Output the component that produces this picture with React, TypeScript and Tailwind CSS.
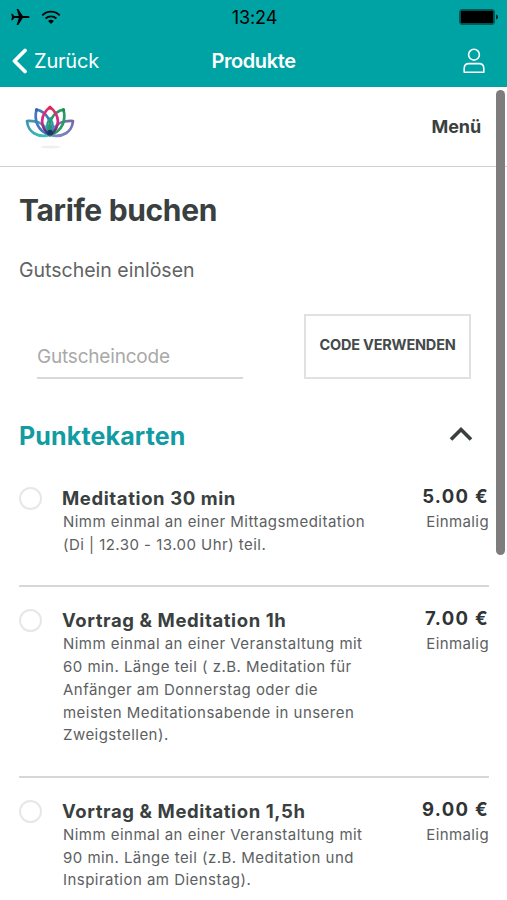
import React from 'react';

interface Tariff {
  title: string;
  lines: string[];
  price: string;
}

const TARIFFS: Tariff[] = [
  {
    title: 'Meditation 30 min',
    lines: ['Nimm einmal an einer Mittagsmeditation', '(Di | 12.30 - 13.00 Uhr) teil.'],
    price: '5.00 €',
  },
  {
    title: 'Vortrag & Meditation 1h',
    lines: [
      'Nimm einmal an einer Veranstaltung mit',
      '60 min. Länge teil ( z.B. Meditation für',
      'Anfänger am Donnerstag oder die',
      'meisten Meditationsabende in unseren',
      'Zweigstellen).',
    ],
    price: '7.00 €',
  },
  {
    title: 'Vortrag & Meditation 1,5h',
    lines: [
      'Nimm einmal an einer Veranstaltung mit',
      '90 min. Länge teil (z.B. Meditation und',
      'Inspiration am Dienstag).',
    ],
    price: '9.00 €',
  },
];

const StatusBar: React.FC = () => (
  <div className="grid h-[34px] grid-cols-[1fr_auto_1fr] items-center pl-2.5 pr-2 text-black">
    <div className="flex items-center gap-[11px]">
      <svg width="20" height="18" viewBox="0 0 20 18" fill="currentColor">
        <path d="M19.6 9c0 .7-.9 1.1-1.8 1.1h-5L8.3 17H6.6l2.2-6.9H4.3L2.5 12.3H1.2L2 9l-.8-3.3h1.3l1.8 2.2h4.5L6.6 1h1.7l4.5 6.9h5c.9 0 1.8.4 1.8 1.1Z" />
      </svg>
      <svg width="20" height="15" viewBox="0 0 20 15" fill="none" stroke="currentColor" strokeWidth="1.8">
        <path d="M1.3 5.3a12.3 12.3 0 0 1 17.4 0" />
        <path d="M4.6 8.5a7.7 7.7 0 0 1 10.8 0" />
        <path d="M10 14 7.1 11.1a4.1 4.1 0 0 1 5.8 0Z" fill="currentColor" stroke="none" />
      </svg>
    </div>
    <span className="text-center text-[18px] tracking-[-0.1px]">13:24</span>
    <svg className="justify-self-end" width="40" height="16" viewBox="0 0 40 16">
      <rect x="0.5" y="0.5" width="35" height="15" rx="2.5" fill="none" stroke="#05595a" />
      <rect x="1.5" y="1.5" width="33" height="13" rx="1" fill="#000" />
      <path d="M37 5.5c1.6.4 2 1.2 2 2.5s-.4 2.1-2 2.5Z" fill="#002b2b" />
    </svg>
  </div>
);

const NavBar: React.FC = () => (
  <div className="grid h-[53px] grid-cols-[1fr_auto_1fr] items-center pl-3 pr-[22px] text-white">
    <div className="flex items-center gap-[7px]">
      <svg width="15" height="26" viewBox="0 0 15 26" fill="none" stroke="currentColor" strokeWidth="3.8" strokeLinecap="round" strokeLinejoin="round">
        <path d="M13 2.5 2.5 13 13 23.5" />
      </svg>
      <span className="text-[20px] tracking-[-0.2px]">Zurück</span>
    </div>
    <span className="ml-2.5 text-center text-[20px] font-semibold tracking-[-0.4px]">Produkte</span>
    <svg className="justify-self-end" width="22" height="26" viewBox="0 0 22 26" fill="none" stroke="currentColor" strokeWidth="1.6">
      <circle cx="11" cy="6.7" r="5.4" />
      <path d="M1.2 24.2v-3.7c0-3.1 1.7-4.9 4.6-4.9h10.4c2.9 0 4.6 1.8 4.6 4.9v3.7Z" strokeLinejoin="round" />
    </svg>
  </div>
);

const LotusLogo: React.FC = () => (
  <svg width="50" height="46" viewBox="0 0 50 46" fill="none" strokeWidth="2.7" strokeLinejoin="round">
    <defs>
      <linearGradient id="petalLeft" x1="0" y1="0" x2="1" y2="1">
        <stop offset="0" stopColor="#3f93ad" />
        <stop offset="1" stopColor="#38c6b8" />
      </linearGradient>
      <linearGradient id="petalRight" x1="1" y1="0" x2="0" y2="1">
        <stop offset="0" stopColor="#7566a8" />
        <stop offset="1" stopColor="#7c8fcb" />
      </linearGradient>
      <linearGradient id="petalCenter" x1="0" y1="0" x2="0" y2="1">
        <stop offset="0" stopColor="#e22b69" />
        <stop offset="0.55" stopColor="#d02b8c" />
        <stop offset="1" stopColor="#27366f" />
      </linearGradient>
    </defs>
    <path d="M25 31C12 34 3 28 2 17c11-.5 20 4 23 14Z" stroke="url(#petalLeft)" />
    <path d="M25 31c13 3 22-3 23-14-11-.5-20 4-23 14Z" stroke="url(#petalRight)" />
    <path d="M25 31C12 27 9 16 11.5 5.5 22 8 28 18 25 31Z" stroke="#4379bb" />
    <path d="M25 31c13-4 16-15 13.5-25.5C28 8 22 18 25 31Z" stroke="#279b60" />
    <path d="M25 31c-11-8-10-20 0-28 10 8 11 20 0 28Z" stroke="url(#petalCenter)" />
    <path d="M25 31c-4-6-4-12 0-17 4 5 4 11 0 17Z" stroke="#2798a0" strokeWidth="1.8" />
    <circle cx="25" cy="28.5" r="2.8" fill="#183967" />
    <circle cx="25" cy="4" r="1.8" fill="#dc2450" />
    <circle cx="11.5" cy="6" r="1.7" fill="#3565a8" />
    <circle cx="38.5" cy="6" r="1.7" fill="#1d8c50" />
    <ellipse cx="25.5" cy="43" rx="10" ry="1.5" fill="#efefef" />
  </svg>
);

const TariffRow: React.FC<{ tariff: Tariff }> = ({ tariff }) => (
  <li className="flex border-b-2 border-[#d6d7d7] pb-[29px] pt-[22px]">
    <span className="size-[23px] shrink-0 rounded-full border-2 border-[#e7e7e7]" />
    <div className="ml-5 grow">
      <h3 className="-mt-px mb-px text-[18.5px] font-bold leading-6 tracking-[0.6px] text-[#3a3f40]">{tariff.title}</h3>
      <p className="ml-px whitespace-nowrap text-[15px] leading-[22.7px] tracking-[0.47px] text-[#5c6061]">
        {tariff.lines.map((line) => (
          <span key={line} className="block">{line}</span>
        ))}
      </p>
    </div>
    <div className="shrink-0 text-right">
      <div className="-mt-[3px] mb-[3px] text-[18.5px] font-bold leading-6 tracking-[1.3px] text-[#303435]">{tariff.price}</div>
      <div className="text-[15px] leading-[22.7px] tracking-[0.4px] text-[#5c6061]">Einmalig</div>
    </div>
  </li>
);

const App: React.FC = () => {
  return (
    <div className="relative h-[900px] w-[507px] overflow-hidden bg-white font-['Inter','Liberation_Sans',sans-serif]">
      <header className="h-[87px] bg-[#00a3a4]">
        <StatusBar />
        <NavBar />
      </header>

      <div className="flex h-20 items-center justify-between border-b border-[#cfd0d0] pl-[25px] pr-[26px]">
        <LotusLogo />
        <span className="text-[18px] font-bold tracking-[-0.1px] text-[#3a3f40]">Menü</span>
      </div>

      <main className="pl-[19px] pr-[18px]">
        <h1 className="mt-[23px] text-[30px] font-bold leading-10 tracking-[-0.35px] text-[#3a3f40]">Tarife buchen</h1>
        <p className="mt-[26px] text-[19.5px] leading-7 text-[#5f6364]">Gutschein einlösen</p>

        <div className="mt-[30px] flex items-end justify-between px-[18px]">
          <div className="h-[37px] w-[206px] border-b-2 border-[#d9d9d9] text-[19px] leading-[30px] tracking-[-0.2px] text-[#a9a9a9]">Gutscheincode</div>
          <button className="h-[65px] w-[167px] border-2 border-[#e0e1e1] pb-1 text-[14.5px] font-bold tracking-[-0.2px] text-[#44494a]">CODE VERWENDEN</button>
        </div>

        <div className="mt-10 flex h-9 items-center justify-between pr-4">
          <h2 className="text-[25px] font-bold tracking-[0.15px] text-[#119ba2]">Punktekarten</h2>
          <svg className="-mt-[7px]" width="24" height="16" viewBox="0 0 24 16" fill="none" stroke="#3a3f40" strokeWidth="3.6">
            <path d="M2 13.5 12 3.5l10 10" />
          </svg>
        </div>

        <ul className="mt-2.5">
          {TARIFFS.map((tariff) => (
            <TariffRow key={tariff.title} tariff={tariff} />
          ))}
        </ul>
      </main>

      {/* Scroll indicator */}
      <div className="absolute right-0.5 top-[90px] h-[465px] w-[9px] rounded-full bg-[#7d7d7d]" />
    </div>
  );
};

export default App;
